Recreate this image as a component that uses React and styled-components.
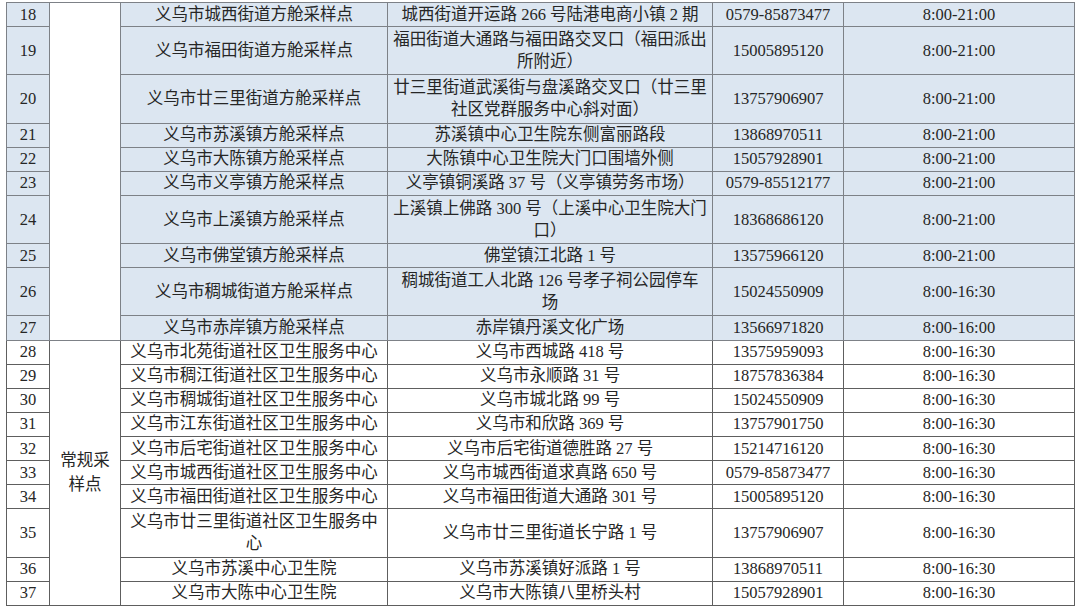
import styled, { createGlobalStyle } from 'styled-components';

const GlobalStyle = createGlobalStyle`
  html, body {
    margin: 0;
    padding: 0;
    background: #ffffff;
  }
  body {
    font-family: 'Liberation Serif', 'Noto Sans CJK SC', serif;
    color: #262626;
  }
`;

const Page = styled.div`
  width: 1080px;
  height: 610px;
  overflow: hidden;
  padding: 2px 0 0 6px;
  box-sizing: border-box;
`;

const Table = styled.table`
  width: 1068px;
  table-layout: fixed;
  border-collapse: collapse;
  font-size: 16.5px;
  line-height: 22px;
`;

const Row = styled.tr`
  height: ${props => (props.$double ? '48.24px' : '24.12px')};
  background: ${props => (props.$blue ? '#dce6f1' : '#ffffff')};
`;

const Cell = styled.td`
  border: 1px solid ${props => (props.$blue ? '#7d8187' : '#5e5e5e')};
  padding: 0;
  text-align: center;
  vertical-align: middle;
  white-space: nowrap;
  overflow: hidden;
`;

const GroupCell = styled(Cell)`
  background: #ffffff;
  line-height: 24px;
`;

const pods = [
  [18, '义乌市城西街道方舱采样点', ['城西街道开运路 266 号陆港电商小镇 2 期'], '0579-85873477', '8:00-21:00'],
  [19, '义乌市福田街道方舱采样点', ['福田街道大通路与福田路交叉口（福田派出', '所附近）'], '15005895120', '8:00-21:00'],
  [20, '义乌市廿三里街道方舱采样点', ['廿三里街道武溪街与盘溪路交叉口（廿三里', '社区党群服务中心斜对面）'], '13757906907', '8:00-21:00'],
  [21, '义乌市苏溪镇方舱采样点', ['苏溪镇中心卫生院东侧富丽路段'], '13868970511', '8:00-21:00'],
  [22, '义乌市大陈镇方舱采样点', ['大陈镇中心卫生院大门口围墙外侧'], '15057928901', '8:00-21:00'],
  [23, '义乌市义亭镇方舱采样点', ['义亭镇铜溪路 37 号（义亭镇劳务市场）'], '0579-85512177', '8:00-21:00'],
  [24, '义乌市上溪镇方舱采样点', ['上溪镇上佛路 300 号（上溪中心卫生院大门', '口）'], '18368686120', '8:00-21:00'],
  [25, '义乌市佛堂镇方舱采样点', ['佛堂镇江北路 1 号'], '13575966120', '8:00-21:00'],
  [26, '义乌市稠城街道方舱采样点', ['稠城街道工人北路 126 号孝子祠公园停车', '场'], '15024550909', '8:00-16:30'],
  [27, '义乌市赤岸镇方舱采样点', ['赤岸镇丹溪文化广场'], '13566971820', '8:00-16:00'],
];

const regular = [
  [28, ['义乌市北苑街道社区卫生服务中心'], '义乌市西城路 418 号', '13575959093'],
  [29, ['义乌市稠江街道社区卫生服务中心'], '义乌市永顺路 31 号', '18757836384'],
  [30, ['义乌市稠城街道社区卫生服务中心'], '义乌市城北路 99 号', '15024550909'],
  [31, ['义乌市江东街道社区卫生服务中心'], '义乌市和欣路 369 号', '13757901750'],
  [32, ['义乌市后宅街道社区卫生服务中心'], '义乌市后宅街道德胜路 27 号', '15214716120'],
  [33, ['义乌市城西街道社区卫生服务中心'], '义乌市城西街道求真路 650 号', '0579-85873477'],
  [34, ['义乌市福田街道社区卫生服务中心'], '义乌市福田街道大通路 301 号', '15005895120'],
  [35, ['义乌市廿三里街道社区卫生服务中', '心'], '义乌市廿三里街道长宁路 1 号', '13757906907'],
  [36, ['义乌市苏溪中心卫生院'], '义乌市苏溪镇好派路 1 号', '13868970511'],
  [37, ['义乌市大陈中心卫生院'], '义乌市大陈镇八里桥头村', '15057928901'],
];

const Lines = ({ lines }) =>
  lines.map((line, i) => (
    <span key={i}>
      {i > 0 && <br />}
      {line}
    </span>
  ));

export default function App() {
  return (
    <Page>
      <GlobalStyle />
      <Table>
        <colgroup>
          <col style={{ width: 43 }} />
          <col style={{ width: 71 }} />
          <col style={{ width: 267 }} />
          <col style={{ width: 325 }} />
          <col style={{ width: 131 }} />
          <col style={{ width: 231 }} />
        </colgroup>
        <tbody>
          {pods.map(([no, name, address, phone, hours], index) => (
            <Row key={no} $blue $double={address.length > 1}>
              <Cell $blue>{no}</Cell>
              {index === 0 && <GroupCell $blue rowSpan={pods.length} />}
              <Cell $blue>{name}</Cell>
              <Cell $blue><Lines lines={address} /></Cell>
              <Cell $blue>{phone}</Cell>
              <Cell $blue>{hours}</Cell>
            </Row>
          ))}
          {regular.map(([no, name, address, phone], index) => (
            <Row key={no} $double={name.length > 1}>
              <Cell>{no}</Cell>
              {index === 0 && (
                <GroupCell rowSpan={regular.length}>
                  常规采<br />样点
                </GroupCell>
              )}
              <Cell><Lines lines={name} /></Cell>
              <Cell>{address}</Cell>
              <Cell>{phone}</Cell>
              <Cell>8:00-16:30</Cell>
            </Row>
          ))}
        </tbody>
      </Table>
    </Page>
  );
}
